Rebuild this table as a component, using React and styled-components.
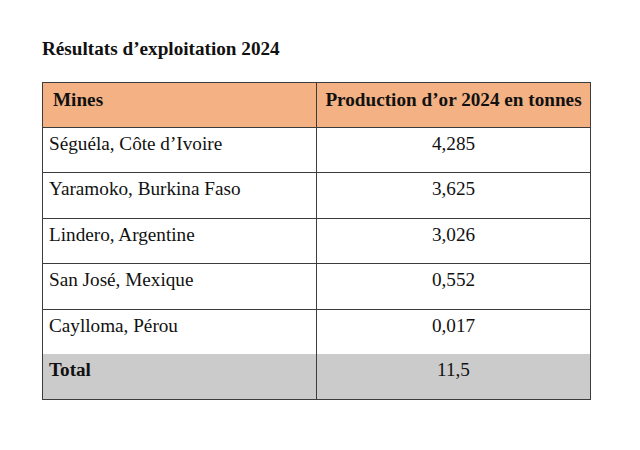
import React from 'react';
import styled, { createGlobalStyle } from 'styled-components';

const GlobalStyle = createGlobalStyle`
  html, body {
    margin: 0;
    background: #ffffff;
  }
  body {
    font-family: "Liberation Serif", "Times New Roman", serif;
    color: #111111;
  }
`;

const Page = styled.div`
  width: 640px;
  height: 450px;
  box-sizing: border-box;
  padding: 38px 0 0 42px;
`;

const Title = styled.h2`
  margin: 0 0 22px;
  font-size: 19.2px;
  line-height: 22px;
  font-weight: bold;
`;

const Table = styled.table`
  width: 549px;
  border-collapse: collapse;
  table-layout: fixed;
  font-size: 19.2px;
  line-height: 22px;
`;

const HeadCell = styled.th`
  height: 45px;
  box-sizing: border-box;
  background: #f4b183;
  border: 1px solid #3c3c3c;
  font-weight: bold;
  text-align: ${(p) => (p.$center ? 'center' : 'left')};
  vertical-align: top;
  padding: 6px ${(p) => (p.$center ? '4px' : '10px')} 0;
`;

const Cell = styled.td`
  height: 45.4px;
  box-sizing: border-box;
  border: 1px solid #3c3c3c;
  border-top: ${(p) => (p.$total ? 'hidden' : '1px solid #3c3c3c')};
  background: ${(p) => (p.$total ? '#cbcbcb' : '#ffffff')};
  font-weight: ${(p) => (p.$bold ? 'bold' : 'normal')};
  text-align: ${(p) => (p.$center ? 'center' : 'left')};
  vertical-align: top;
  padding: 5px 6px 0;
`;

const rows = [
  { mine: 'Séguéla, Côte d’Ivoire', value: '4,285' },
  { mine: 'Yaramoko, Burkina Faso', value: '3,625' },
  { mine: 'Lindero, Argentine', value: '3,026' },
  { mine: 'San José, Mexique', value: '0,552' },
  { mine: 'Caylloma, Pérou', value: '0,017' },
];

export default function App() {
  return (
    <>
      <GlobalStyle />
      <Page>
        <Title>Résultats d’exploitation 2024</Title>
        <Table>
          <thead>
            <tr>
              <HeadCell>Mines</HeadCell>
              <HeadCell $center>Production d’or 2024 en tonnes</HeadCell>
            </tr>
          </thead>
          <tbody>
            {rows.map((r) => (
              <tr key={r.mine}>
                <Cell>{r.mine}</Cell>
                <Cell $center>{r.value}</Cell>
              </tr>
            ))}
            <tr>
              <Cell $total $bold>Total</Cell>
              <Cell $total $center>11,5</Cell>
            </tr>
          </tbody>
        </Table>
      </Page>
    </>
  );
}
